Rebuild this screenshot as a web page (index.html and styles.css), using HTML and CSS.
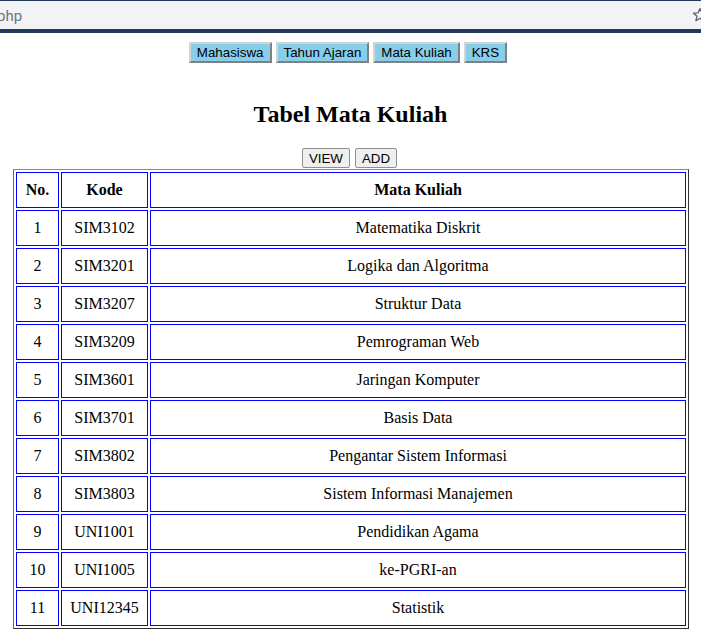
FILE: index.html
```html
<!DOCTYPE html>
<html>
<head>
<meta charset="utf-8">
<title>Tabel Mata Kuliah</title>
<link rel="stylesheet" href="styles.css">
</head>
<body>
<div class="chrome">
  <div class="urlbar">
    <span class="url">php</span>
    <svg class="star" width="16" height="16" viewBox="0 0 16 16"><path d="M8 1.6l1.9 4.2 4.6.4-3.5 3 1.1 4.5L8 11.3l-4.1 2.4 1.1-4.5-3.5-3 4.6-.4z" fill="none" stroke="#5f6368" stroke-width="1.3" stroke-linejoin="round"/></svg>
  </div>
</div>
<div class="page">
  <div class="nav">
    <button class="navbtn">Mahasiswa</button>
    <button class="navbtn">Tahun Ajaran</button>
    <button class="navbtn">Mata Kuliah</button>
    <button class="navbtn">KRS</button>
  </div>
  <h2 class="title">Tabel Mata Kuliah</h2>
  <div class="actions">
    <button class="actbtn">VIEW</button>
    <button class="actbtn">ADD</button>
  </div>
  <table class="data">
    <tr><th class="c-no">No.</th><th class="c-kode">Kode</th><th>Mata Kuliah</th></tr>
    <tr><td>1</td><td>SIM3102</td><td>Matematika Diskrit</td></tr>
    <tr><td>2</td><td>SIM3201</td><td>Logika dan Algoritma</td></tr>
    <tr><td>3</td><td>SIM3207</td><td>Struktur Data</td></tr>
    <tr><td>4</td><td>SIM3209</td><td>Pemrograman Web</td></tr>
    <tr><td>5</td><td>SIM3601</td><td>Jaringan Komputer</td></tr>
    <tr><td>6</td><td>SIM3701</td><td>Basis Data</td></tr>
    <tr><td>7</td><td>SIM3802</td><td>Pengantar Sistem Informasi</td></tr>
    <tr><td>8</td><td>SIM3803</td><td>Sistem Informasi Manajemen</td></tr>
    <tr><td>9</td><td>UNI1001</td><td>Pendidikan Agama</td></tr>
    <tr><td>10</td><td>UNI1005</td><td>ke-PGRI-an</td></tr>
    <tr><td>11</td><td>UNI12345</td><td>Statistik</td></tr>
  </table>
</div>
</body>
</html>
```

FILE: styles.css
```css
html, body {
  margin: 0;
  padding: 0;
  background: #ffffff;
}
body {
  font-family: "Liberation Serif", "Times New Roman", serif;
  font-size: 16px;
  color: #000;
  overflow: hidden;
}
.chrome {
  height: 33px;
  box-sizing: border-box;
  border-top: 1px solid #223b5c;
  border-bottom: 4px solid #223b5c;
  background: #f1f3f4;
}
.urlbar {
  height: 28px;
  display: flex;
  align-items: center;
  justify-content: space-between;
  overflow: hidden;
}
.url {
  font-family: Roboto, "Noto Sans", sans-serif;
  font-size: 15px;
  color: #70757a;
  margin-left: -3px;
  margin-top: 1px;
}
.star {
  margin-right: -7px;
  flex: none;
}
.page {
  padding: 0 8px;
}
.nav {
  display: flex;
  justify-content: center;
  gap: 4px;
  margin-top: 9px;
  padding-right: 5px;
}
.navbtn {
  font-family: "Liberation Sans", Arial, sans-serif;
  font-size: 13.33px;
  line-height: 15px;
  height: 21px;
  padding: 1px 6px;
  margin: 0;
  background: #87ceeb;
  color: #000;
  border: 2px outset #d4d4d4;
  border-radius: 0;
}
.title {
  font-size: 24px;
  font-weight: bold;
  text-align: center;
  line-height: 28px;
  margin: 37px 0 20px;
}
.actions {
  display: flex;
  justify-content: center;
  gap: 5px;
  height: 21px;
  padding-right: 2px;
}
.actbtn {
  font-family: "Liberation Sans", Arial, sans-serif;
  font-size: 13.33px;
  line-height: 15px;
  height: 20px;
  padding: 1px 6px;
  margin: 0;
  background: #efefef;
  color: #000;
  border: 1px solid #8f8f8f;
  border-radius: 2px;
}
.data {
  width: 676px;
  margin-left: 5px;
  border-collapse: separate;
  border-spacing: 2px;
  border: 1px solid;
  border-color: #8a8a8a #333 #333 #666;
}
.data th, .data td {
  border: 1px solid #0000ff;
  padding: 8px;
  line-height: 18px;
  text-align: center;
  font-size: 16px;
}
.data .c-no {
  width: 25px;
}
.data .c-kode {
  width: 69px;
}
```
